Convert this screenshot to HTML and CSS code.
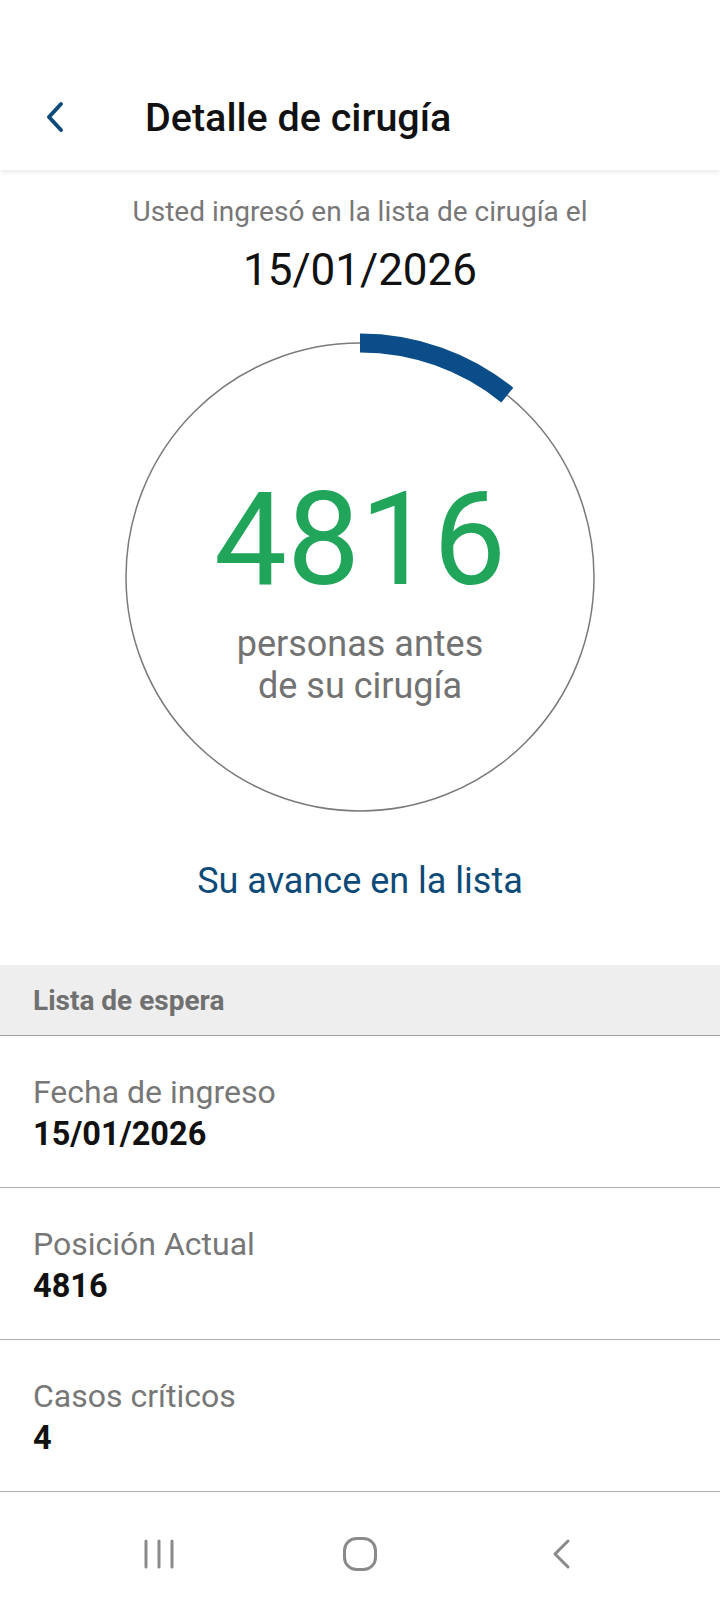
FILE: index.html
```html
<!DOCTYPE html>
<html lang="es">
<head>
    <meta charset="UTF-8">
    <meta name="viewport" content="width=device-width, initial-scale=1.0">
    <title>Detalle de cirugía</title>
    <link rel="stylesheet" href="styles.css">
</head>
<body>

    <header class="app-bar">
        <button class="back-btn" aria-label="Volver">
            <svg width="20" height="32" viewBox="0 0 20 32">
                <polyline points="16,3 4,16 16,29" fill="none" stroke="#0f4a7d" stroke-width="4" stroke-linecap="round" stroke-linejoin="round"/>
            </svg>
        </button>
        <h1 class="app-title">Detalle de cirugía</h1>
    </header>

    <main>
        <p class="intro">Usted ingresó en la lista de cirugía el</p>
        <p class="intro-date">15/01/2026</p>

        <div class="ring">
            <svg class="ring-svg" width="490" height="490" viewBox="0 0 490 490">
                <circle cx="245" cy="245" r="234" fill="none" stroke="#7a7a7a" stroke-width="1.5"/>
                <!-- progreso: ~11% de la vuelta -->
                <path d="M245 11 A234 234 0 0 1 392.3 63.1" fill="none" stroke="#0b4d88" stroke-width="19"/>
            </svg>
            <div class="ring-content">
                <div class="ring-number">4816</div>
                <div class="ring-label">personas antes<br>de su cirugía</div>
            </div>
        </div>

        <a class="progress-link" href="#">Su avance en la lista</a>

        <div class="section-head">Lista de espera</div>

        <div class="info-row">
            <div class="info-label">Fecha de ingreso</div>
            <div class="info-value">15/01/2026</div>
        </div>
        <div class="info-row">
            <div class="info-label">Posición Actual</div>
            <div class="info-value">4816</div>
        </div>
        <div class="info-row">
            <div class="info-label">Casos críticos</div>
            <div class="info-value">4</div>
        </div>
    </main>

    <nav class="sys-nav">
        <div class="sys-btn">
            <svg width="32" height="32" viewBox="0 0 32 32">
                <g stroke="#8a8a8a" stroke-width="3" stroke-linecap="round">
                    <line x1="3" y1="3" x2="3" y2="29"/>
                    <line x1="16" y1="3" x2="16" y2="29"/>
                    <line x1="29" y1="3" x2="29" y2="29"/>
                </g>
            </svg>
        </div>
        <div class="sys-btn">
            <svg width="36" height="36" viewBox="0 0 36 36">
                <rect x="2.5" y="2.5" width="31" height="31" rx="12" fill="none" stroke="#8a8a8a" stroke-width="3"/>
            </svg>
        </div>
        <div class="sys-btn">
            <svg width="22" height="32" viewBox="0 0 22 32">
                <polyline points="18,3 5,16 18,29" fill="none" stroke="#8a8a8a" stroke-width="3" stroke-linecap="round" stroke-linejoin="round"/>
            </svg>
        </div>
    </nav>

</body>
</html>
```

FILE: styles.css
```css
* {
    box-sizing: border-box;
}
body {
    margin: 0;
    width: 720px;
    font-family: Roboto, "Noto Sans", Arial, sans-serif;
    background-color: #fff;
    color: #111;
}
p {
    margin: 0;
}

/* barra superior */
.app-bar {
    height: 170px;
    padding-top: 64px;
    display: flex;
    align-items: center;
    background-color: #fff;
    box-shadow: 0 2px 5px rgba(0, 0, 0, 0.09);
    position: relative;
    z-index: 1;
}
.back-btn {
    border: none;
    background: none;
    padding: 0;
    margin-left: 45px;
    width: 20px;
    height: 32px;
    display: flex;
}
.app-title {
    margin: 0 0 0 80px;
    font-size: 39.5px;
    font-weight: 500;
    color: #111;
}

main {
    display: flex;
    flex-direction: column;
    align-items: center;
}
.intro {
    margin-top: 25px;
    font-size: 28px;
    line-height: 34px;
    color: #777;
}
.intro-date {
    margin-top: 15px;
    font-size: 44px;
    line-height: 52px;
    color: #111;
}

/* anillo de progreso */
.ring {
    position: relative;
    width: 490px;
    height: 490px;
    margin-top: 36px;
}
.ring-svg {
    position: absolute;
    top: 0;
    left: 0;
}
.ring-content {
    position: relative;
    display: flex;
    flex-direction: column;
    align-items: center;
    padding-top: 143px;
}
.ring-number {
    font-size: 130px;
    line-height: 130px;
    color: #21a55b;
}
.ring-label {
    margin-top: 18px;
    font-size: 36px;
    line-height: 42px;
    color: #727272;
    text-align: center;
}

.progress-link {
    margin-top: 38px;
    font-size: 36px;
    line-height: 42px;
    color: #0d4a78;
    text-decoration: none;
}

/* lista de espera */
.section-head {
    align-self: stretch;
    margin-top: 63px;
    height: 71px;
    padding-left: 33px;
    display: flex;
    align-items: center;
    font-size: 28px;
    font-weight: 700;
    color: #707070;
    background-color: #eee;
    border-bottom: 1px solid #a0a0a0;
}
.info-row {
    align-self: stretch;
    height: 152px;
    padding: 36px 33px 0;
    border-bottom: 1px solid #b0b0b0;
}
.info-label {
    font-size: 32px;
    line-height: 40px;
    color: #777;
}
.info-value {
    margin-top: 2px;
    font-size: 32.5px;
    line-height: 40px;
    font-weight: 700;
    color: #111;
}

/* barra de navegación del sistema */
.sys-nav {
    display: grid;
    grid-template-columns: repeat(3, 201px);
    justify-content: center;
    padding-top: 44px;
}
.sys-btn {
    display: flex;
    justify-content: center;
    align-items: center;
    height: 36px;
}
```
